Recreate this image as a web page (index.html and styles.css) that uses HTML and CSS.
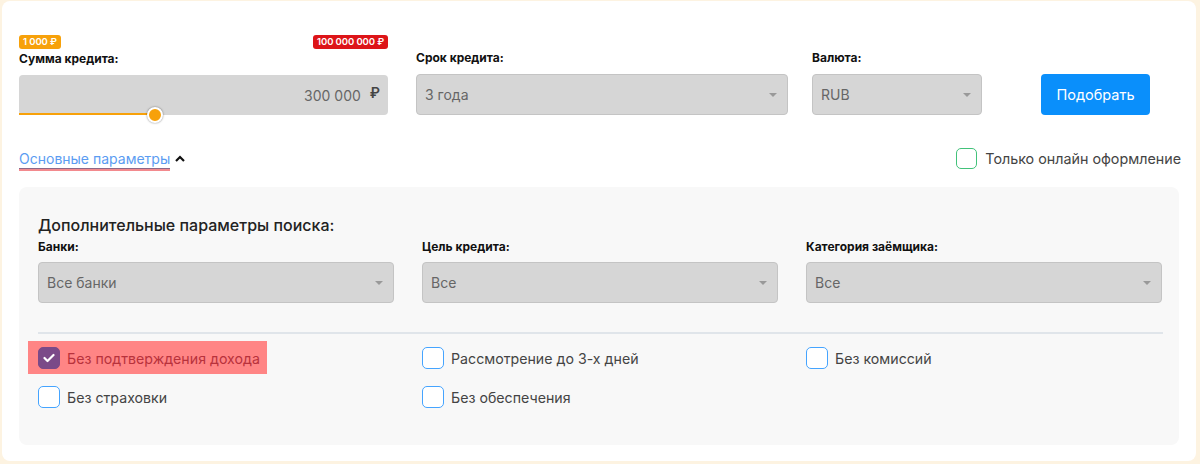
FILE: index.html
```html
<!DOCTYPE html>
<html lang="ru">
<head>
<meta charset="utf-8">
<link rel="stylesheet" href="styles.css">
</head>
<body>
<div class="card">
  <div class="top-row">
    <div class="field field-sum">
      <div class="badges">
        <span class="badge badge-min">1 000 ₽</span>
        <span class="badge badge-max">100 000 000 ₽</span>
      </div>
      <div class="label">Сумма кредита:</div>
      <div class="input-sum">
        <span class="sum-value">300 000</span>
        <span class="sum-cur">₽</span>
        <div class="slider-track"></div>
        <div class="slider-thumb"></div>
      </div>
    </div>
    <div class="field field-term">
      <div class="label">Срок кредита:</div>
      <div class="select"><span>3 года</span><i class="caret"></i></div>
    </div>
    <div class="field field-cur">
      <div class="label">Валюта:</div>
      <div class="select"><span>RUB</span><i class="caret"></i></div>
    </div>
    <button class="btn">Подобрать</button>
  </div>

  <div class="second-row">
    <div class="toggle">
      <span class="toggle-link">Основные параметры</span>
      <svg class="chev" width="10" height="7" viewBox="0 0 10 7"><path d="M1 6 L5 2 L9 6" fill="none" stroke="#111" stroke-width="2.2"/></svg>
      <div class="toggle-mark"></div>
    </div>
    <label class="online">
      <span class="box box-green"></span>
      <span class="online-text">Только онлайн оформление</span>
    </label>
  </div>

  <div class="panel">
    <div class="panel-title">Дополнительные параметры поиска:</div>
    <div class="grid3">
      <div class="pfield">
        <div class="label">Банки:</div>
        <div class="select"><span>Все банки</span><i class="caret"></i></div>
      </div>
      <div class="pfield">
        <div class="label">Цель кредита:</div>
        <div class="select"><span>Все</span><i class="caret"></i></div>
      </div>
      <div class="pfield">
        <div class="label">Категория заёмщика:</div>
        <div class="select"><span>Все</span><i class="caret"></i></div>
      </div>
    </div>
    <div class="divider"></div>
    <div class="checks">
      <div class="check check-hl">
        <span class="box box-checked"><svg width="12" height="10" viewBox="0 0 12 10"><path d="M1.5 5 L4.5 8 L10.5 2" fill="none" stroke="#fff" stroke-width="2.2" stroke-linecap="round" stroke-linejoin="round"/></svg></span>
        <span class="check-text">Без подтверждения дохода</span>
      </div>
      <div class="check"><span class="box"></span><span class="check-text">Рассмотрение до 3-х дней</span></div>
      <div class="check"><span class="box"></span><span class="check-text">Без комиссий</span></div>
      <div class="check"><span class="box"></span><span class="check-text">Без страховки</span></div>
      <div class="check"><span class="box"></span><span class="check-text">Без обеспечения</span></div>
    </div>
  </div>
</div>
</body>
</html>
```

FILE: styles.css
```css
* { box-sizing: border-box; }
html, body { margin: 0; padding: 0; }
body {
  background: #fdf3e1;
  font-family: Inter, "Open Sans", "Liberation Sans", sans-serif;
  color: #222;
  width: 1200px;
  height: 464px;
  overflow: hidden;
  padding: 1px 4px 0 2px;
}
.card {
  background: #fff;
  border-radius: 8px;
  height: 460px;
  padding: 33px 17px 0 17px;
}
.top-row {
  display: flex;
  align-items: flex-end;
  height: 81px;
}
.field { display: flex; flex-direction: column; }
.field-sum { width: 369px; margin-right: 28px; }
.field-term { width: 372px; margin-right: 24px; }
.field-cur { width: 170px; margin-right: 59px; }
.badges {
  display: flex;
  justify-content: space-between;
  height: 14px;
  margin-bottom: 2px;
}
.badge {
  font-size: 9.5px;
  font-weight: 600;
  color: #fff;
  line-height: 14px;
  padding: 0 4px;
  border-radius: 3px;
  letter-spacing: -0.1px;
}
.badge-min { background: #f7a10a; }
.badge-max { background: #dd1418; }
.label {
  font-size: 12px;
  font-weight: 700;
  color: #111;
  line-height: 16px;
  margin-bottom: 8px;
}
.input-sum {
  position: relative;
  height: 40px;
  background: #d6d6d6;
  border-radius: 4px;
  display: flex;
  align-items: center;
  justify-content: flex-end;
  padding-right: 8px;
  color: #666;
}
.sum-value { font-size: 14px; margin-right: 9px; }
.sum-cur { font-size: 14px; font-weight: 600; color: #444; margin-top: -6px; }
.slider-track {
  position: absolute;
  left: 0; bottom: 0;
  width: 136px;
  height: 2px;
  background: #f7a10a;
}
.slider-thumb {
  position: absolute;
  left: 128px; bottom: -8px;
  width: 16px; height: 16px;
  border-radius: 50%;
  background: #f7a10a;
  border: 2.5px solid #fff;
  box-shadow: 0 0 2px rgba(0,0,0,0.5);
}
.select {
  position: relative;
  height: 41px;
  background: #d6d6d6;
  border: 1px solid #c4c4c4;
  border-radius: 4px;
  display: flex;
  align-items: center;
  padding-left: 8px;
  font-size: 14px;
  color: #666;
}
.caret {
  position: absolute;
  right: 10px; top: 18px;
  width: 0; height: 0;
  border-left: 4px solid transparent;
  border-right: 4px solid transparent;
  border-top: 4px solid #999;
}
.btn {
  width: 109px;
  height: 41px;
  background: #0a8ffb;
  color: #fff;
  border: 0;
  border-radius: 4px;
  font-family: inherit;
  font-size: 14.5px;
}
.second-row {
  display: flex;
  justify-content: space-between;
  align-items: center;
  margin-top: 32px;
  height: 22px;
}
.toggle {
  position: relative;
  display: flex;
  align-items: center;
  margin-top: 2px;
}
.toggle-link {
  color: #5b9cf2;
  font-size: 14px;
  line-height: 18px;
}
.chev { margin-left: 5px; margin-top: -1px; }
.toggle-mark {
  position: absolute;
  left: 0; top: 18px;
  width: 151px;
  height: 3px;
  background: #f38a8e;
  border-top: 1px solid #8a6a8a;
}
.online { display: flex; align-items: center; margin-right: -2px; }
.box {
  display: inline-flex;
  align-items: center;
  justify-content: center;
  width: 22px;
  height: 22px;
  border: 1.5px solid #45a4ff;
  border-radius: 5px;
  background: #fff;
  flex: none;
}
.box-green { border-color: #42c27a; width: 21px; height: 21px; }
.online-text { font-size: 14.3px; color: #444; margin-left: 8px; }
.panel {
  margin-top: 18px;
  background: #f8f8f8;
  border-radius: 8px;
  height: 258px;
  padding: 28px 19px 0 19px;
}
.panel-title {
  font-size: 16px;
  font-weight: 500;
  color: #222;
  line-height: 20px;
  margin-bottom: 4px;
}
.grid3 {
  display: grid;
  grid-template-columns: 356px 356px 356px;
  column-gap: 28px;
}
.pfield .label { margin-bottom: 7px; }
.divider {
  height: 2px;
  background: #e0e5ea;
  margin-top: 29px;
  width: 1125px;
}
.checks {
  display: grid;
  grid-template-columns: 384px 384px 356px;
  row-gap: 17px;
  margin-top: 13px;
}
.check {
  display: flex;
  align-items: center;
  height: 22px;
}
.check-text {
  font-size: 14.2px;
  color: #444;
  margin-left: 7px;
}
.check-hl { position: relative; }
.check-hl::before {
  content: "";
  position: absolute;
  left: -10px; top: -6px;
  width: 239px; height: 33px;
  background: #ff8585;
}
.check-hl .box, .check-hl .check-text { position: relative; }
.check-hl .check-text { color: #b8323c; }
.box-checked {
  background: #7b4a88;
  border-color: #7b4a88;
}
```
